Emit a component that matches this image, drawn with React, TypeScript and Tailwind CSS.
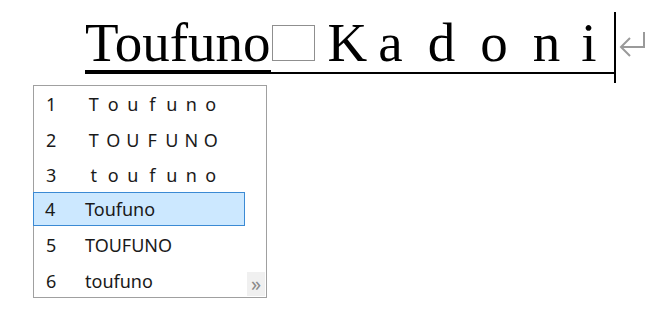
import React from "react";

const serif = { fontFamily: '"Liberation Serif", "Times New Roman", serif' };

const candidates = [
  { n: "1", text: "Toufuno", spaced: true, row: "h-[35.5px]" },
  { n: "2", text: "TOUFUNO", spaced: true, row: "h-[35.5px]" },
  { n: "3", text: "toufuno", spaced: true, row: "h-[35.5px]" },
  { n: "4", text: "Toufuno", spaced: false, row: "h-[34px] -mt-[1.5px]" },
  { n: "5", text: "TOUFUNO", spaced: false, row: "h-[36px] pt-[3px]" },
  { n: "6", text: "toufuno", spaced: false, row: "h-[36px] pt-[3px]" },
];

const kadoni = [
  { c: "K", ml: "ml-[13px]" },
  { c: "a", ml: "ml-[11px]" },
  { c: "d", ml: "ml-[25px]" },
  { c: "o", ml: "ml-[25px]" },
  { c: "n", ml: "ml-[25px]" },
  { c: "i", ml: "ml-[21px]" },
];

function ReturnMark() {
  return (
    <svg width="30" height="26" viewBox="0 0 30 26" className="absolute left-[533px] top-[16px]">
      <path d="M26 1 V16 H3" fill="none" stroke="#9a9a9a" strokeWidth="2" />
      <path d="M12 7 L3 16 L12 25" fill="none" stroke="#9a9a9a" strokeWidth="2" />
    </svg>
  );
}

export default function App() {
  return (
    <div className="w-[658px] h-[321px] bg-white overflow-hidden pt-[15px]">
      <div className="relative ml-[85px] w-[530px] flex items-end text-black" style={serif}>
        <div className="text-[55px] leading-[55px] border-b-4 border-black">Toufuno</div>
        <div className="flex-1 flex items-end border-b-2 border-black pb-[2px] text-[55px] leading-[55px]">
          <div className="ml-[1px] mb-[9px] w-[43px] h-[36px] border border-[#8f8f8f]" />
          {kadoni.map((k) => (
            <span key={k.c} className={k.ml}>
              {k.c}
            </span>
          ))}
        </div>
        <div className="absolute left-[529px] top-[-3px] w-[2px] h-[71px] bg-black" />
        <ReturnMark />
      </div>

      <div
        className="relative mt-[11px] ml-[33px] w-[234px] h-[213px] pt-[1px] border border-[#a0a0a0] bg-white text-[18px] text-[#1a1a1a]"
        style={{ fontFamily: '"Noto Sans", "Open Sans", sans-serif' }}
      >
        {candidates.map((c) => {
          const selected = c.n === "4";
          return (
            <div
              key={c.n}
              className={
                selected
                  ? `flex items-center w-[212px] -ml-px bg-[#cce8ff] border border-[#3b8ad4] ${c.row}`
                  : `flex items-center w-[212px] ${c.row}`
              }
            >
              <span className={selected ? "w-[39px] pl-[11px]" : "w-[51px] pl-[12px]"}>{c.n}</span>
              {c.spaced ? (
                <span className="flex -ml-[1px]">
                  {c.text.split("").map((ch, i) => (
                    <span key={i} className="w-[19.5px] text-center">
                      {ch}
                    </span>
                  ))}
                </span>
              ) : (
                <span className={selected ? "ml-[12px]" : ""}>{c.text}</span>
              )}
            </div>
          );
        })}
        <div className="absolute right-[1px] bottom-[1px] w-[18px] h-[24px] bg-[#f0f0f0] flex items-center justify-center text-[20px] leading-none text-[#8a8a8a]">
          »
        </div>
      </div>
    </div>
  );
}
